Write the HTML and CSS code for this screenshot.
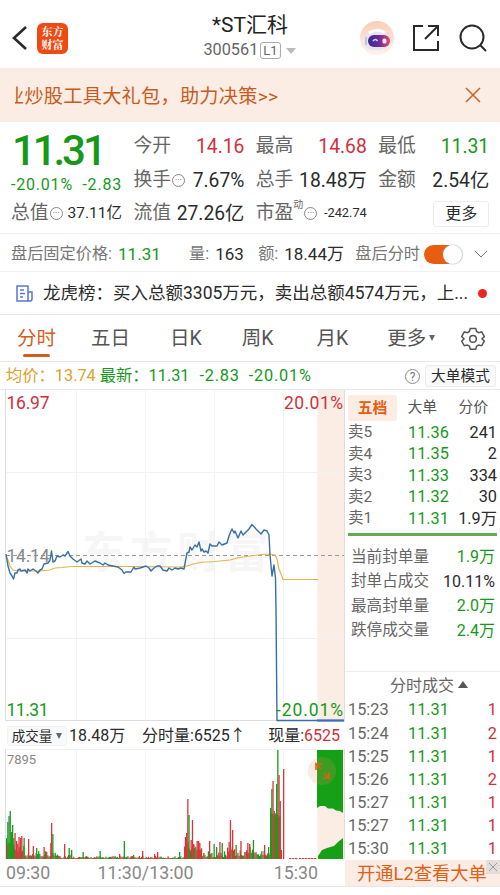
FILE: index.html
```html
<!DOCTYPE html>
<html lang="zh-CN">
<head>
    <meta charset="UTF-8">
    <meta name="viewport" content="width=device-width, initial-scale=1.0">
    <link rel="stylesheet" href="styles.css">
    <title>*ST汇科 300561</title>
</head>
<body>

    <!-- Header -->
    <header class="header">
        <svg class="back" width="16" height="26" viewBox="0 0 16 26"><path d="M14 2 2 13l12 11"/></svg>
        <div class="logo">东方<br>财富</div>
        <div class="title">
            <div class="stock-name">*ST汇科</div>
            <div class="stock-code">300561<span class="level">L1</span><i class="caret"></i></div>
        </div>
        <svg class="robot" width="36" height="36" viewBox="0 0 36 36">
            <defs>
                <linearGradient id="visor"><stop offset="0" stop-color="#352a91"/><stop offset=".5" stop-color="#6d2c9b"/><stop offset="1" stop-color="#df4868"/></linearGradient>
                <linearGradient id="halo" x2="0" y2="1"><stop offset="0" stop-color="#fbcdb8"/><stop offset="1" stop-color="#fff3ed"/></linearGradient>
            </defs>
            <circle cx="18" cy="18" r="17" fill="url(#halo)"/>
            <path d="M5 20C6 13 12 11 20 11s11 4 11 10-6 9-14 9S5 28 5 20Z" fill="#e6e4ee"/>
            <path d="M10 13c4-3 11-4 16 0" fill="none" stroke="#fff" stroke-width="3"/>
            <path d="M7 17v8" stroke="#c3c4d5" stroke-width="2"/>
            <rect x="9" y="15" width="22" height="12" rx="6" fill="url(#visor)"/>
            <path d="M14 21q2.500-3 4.500 0" fill="none" stroke="#cfd6ff" stroke-width="1.600"/>
            <rect x="23.500" y="18.500" width="4" height="5" rx="1.500" fill="#ffe6f1"/>
        </svg>
        <svg class="share" width="28" height="28" viewBox="0 0 28 28"><path d="M11 2H2v24h24V17M16 2h10v10M26 2 13 15"/></svg>
        <svg class="search" width="28" height="28" viewBox="0 0 28 28"><circle cx="13" cy="13" r="11.5"/><path d="m21 21 6 6"/></svg>
    </header>

    <!-- Promo banner -->
    <div class="promo">
        <div class="promo-text"><span>业炒股工具大礼包，助力决策&gt;&gt;</span></div>
        <svg width="16" height="16" viewBox="0 0 16 16"><path d="m1 1 14 14M15 1 1 15"/></svg>
    </div>

    <!-- Quote -->
    <section class="quote">
        <div class="price">
            <div class="price-now">11.31</div>
            <div class="price-rate"><span>-20.01%</span><span>-2.83</span></div>
        </div>
        <div class="cell"><label>今开</label><b class="red">14.16</b></div>
        <div class="cell"><label>最高</label><b class="red">14.68</b></div>
        <div class="cell"><label>最低</label><b class="green">11.31</b></div>
        <div class="cell"><label>换手<i class="dots">···</i></label><b>7.67%</b></div>
        <div class="cell"><label>总手</label><b>18.48万</b></div>
        <div class="cell"><label>金额</label><b>2.54亿</b></div>
        <div class="cell"><label>总值<i class="dots">···</i></label><b class="small">37.11亿</b></div>
        <div class="cell"><label>流值</label><b>27.26亿</b></div>
        <div class="cell"><label>市盈<sup>动</sup><i class="dots">···</i></label><b class="tiny">-242.74</b></div>
        <div class="cell end"><button class="more">更多</button></div>
    </section>

    <!-- After-hours fixed price -->
    <div class="after">
        <label>盘后固定价格:</label><b class="green after-price">11.31</b>
        <label>量:</label><b class="after-vol">163</b>
        <label>额:</label><b class="after-sum">18.44万</b>
        <label>盘后分时</label>
        <span class="switch"></span>
        <svg width="14" height="9" viewBox="0 0 14 9"><path d="m1 1 6 6 6-6"/></svg>
    </div>

    <!-- News -->
    <div class="news">
        <svg width="17" height="17" viewBox="0 0 17 17"><path d="M1 1h11v15H1zM12 7h4v7q0 2-2 2h-2M4 5h4M4 8.500h5M4 12h3"/></svg>
        <div class="news-text">龙虎榜：买入总额3305万元，卖出总额4574万元，上...</div>
        <i class="news-dot"></i>
    </div>

    <!-- Tabs -->
    <nav class="tabs">
        <a class="tab active">分时</a>
        <a class="tab">五日</a>
        <a class="tab">日K</a>
        <a class="tab">周K</a>
        <a class="tab">月K</a>
        <a class="tab">更多<i class="caret dark"></i></a>
        <svg width="24" height="24" viewBox="0 0 24 24"><path d="M9.300 1.500h5.400l.9 3 2 1.150 3.100-.7 2.600 4.600L21 11.800l2.300 2.350-2.600 4.600-3.100-.75-2 1.150-.9 3.100H9.300l-.9-3.100-2-1.150-3.100.75-2.600-4.600L3 11.800.7 9.550l2.600-4.600 3.100.7 2-1.150z"/><circle cx="12" cy="11.900" r="3.300"/></svg>
    </nav>

    <!-- Averages line -->
    <div class="avg">
        <span class="yellow">均价：13.74</span>
        <span class="green latest">最新：11.31</span>
        <span class="green change">-2.83</span>
        <span class="green percent">-20.01%</span>
        <i class="help">?</i>
        <button class="mode">大单模式</button>
    </div>

    <main class="board">
        <!-- Charts -->
        <section class="charts">
            <svg class="price-chart" width="345" height="332" viewBox="0 390 345 332">
                <rect class="band" x="317.500" y="390" width="26.500" height="332"/>
                <text class="watermark" x="82" y="568" textLength="186">东方财富</text>
                <path class="grid" d="M76.500 390V721M145.500 390V721M214.500 390V721M283.500 390V721M6 472.500H343M6 638.500H343"/>
                <path class="frame" d="M5.500 390V720.500H344M344.500 390V722"/>
                <path class="middle" d="M6 555.500H344"/>
                <text class="label grey" x="6.500" y="562" textLength="43">14.14</text>
                <path class="avg-line" d="M6 556 8 560 10 566 13 570 18 571 30 571 40 571 50 570 55 568 62 567.500 72 566.500 100 566.500 140 566.500 180 567 187 566 193 564 200 562.500 215 561.500 230 560 237 558 250 556 262 554.500 270 554 275 555 277 559 279 569 281 574 283 579.500H318"/>
                <path class="price-line" d="M6 554 8 566 10 573 12 576 13.500 579 15 573 17 573 18 570 20 569 21 571 25 570 27 573 28 569 30 571 33 569 36 571 38 573 40 570 42 569 44 564 48 563 50 560 51.500 551 53 562 55 561 57 556 60 557 63 555 65 556 68 551.500 70 556 73 559 77 562 81 559 82 563 85 564 87 561 90 564 95 561 100 563 103 565 105 563 108 565 118 567 122 570 124 573.500 126 572 131 572 134 567 135 569 140 568 143 567 146 566 149 568 151 571 154 568 157 566 160 566 163 570 167 571 169 568 172 570 175 568 178 569 181 568 184 569 186 558 187 553 189 552 190 547 192 550 195 545 197 547 199 542 201 551 202 549 204 552 206 551 208 553 210 544 212 546 217 546 219 542 222 545 227 543 229 536 231 531 232 529 234 533 235 531 238 538 241 531 243 535 246 532 249 529 252 524.500 256 529 261 534 264 530 267 531 269 535 270 555 272 576 274 565 275.500 578 276 610 277 720.500H344"/>
                <path class="close-line" d="M317 720.500h27"/>
                <text class="label red" x="6.500" y="409" textLength="43">16.97</text>
                <text class="label red" x="284" y="409" textLength="59">20.01%</text>
                <text class="label green" x="6.500" y="716" textLength="42">11.31</text>
                <text class="label green" x="276" y="716" textLength="67">-20.01%</text>
            </svg>

            <div class="vol-head">
                <button class="vol-button">成交量<i class="caret dark"></i></button>
                <span class="vol-total">18.48万</span>
                <span class="vol-minute">分时量:6525↑</span>
                <span class="vol-now">现量:<em>6525</em></span>
            </div>

            <svg class="vol-chart" width="345" height="110" viewBox="0 749 345 110">
                <rect class="band" x="317.500" y="749" width="26.500" height="110"/>
                <path class="grid" d="M6 749.500H344M76.500 749V859M145.500 749V859M214.500 749V859M283.500 749V859"/>
                <path class="frame" d="M5.500 749V859M344.500 749V859"/>
                <g id="bars"></g>
                <path class="auction" d="M317 750h26v63l-3-2-4-.5-3-2-5 0-3-2.500-5 0-3 2zM318 859v-3l4-6 5-2 7-2 4-4 5-4v21z"/>
                <circle class="expand-bg" cx="322" cy="771" r="14"/>
                <path class="expand" d="M321 769l-5-5v6M316 764h6M324 773l5 5v-6M329 778h-6"/>
                <text class="vol-max" x="7" y="764" textLength="29">7895</text>
            </svg>

            <div class="times"><span>09:30</span><span class="noon">11:30/13:00</span><span>15:30</span></div>
        </section>

        <!-- Order book -->
        <aside class="side">
            <div class="side-tabs"><span class="on">五档</span><span>大单</span><span>分价</span></div>
            <div class="asks">
                <div class="row"><span>卖5</span><b class="green">11.36</b><b>241</b></div>
                <div class="row"><span>卖4</span><b class="green">11.35</b><b>2</b></div>
                <div class="row"><span>卖3</span><b class="green">11.33</b><b>334</b></div>
                <div class="row"><span>卖2</span><b class="green">11.32</b><b>30</b></div>
                <div class="row"><span>卖1</span><b class="green">11.31</b><b>1.9万</b></div>
            </div>
            <div class="stats">
                <div><span>当前封单量</span><b class="green">1.9万</b></div>
                <div><span>封单占成交</span><b>10.11%</b></div>
                <div><span>最高封单量</span><b class="green">2.0万</b></div>
                <div><span>跌停成交量</span><b class="green">2.4万</b></div>
            </div>
            <div class="deals-title">分时成交<i class="caret up"></i></div>
            <div class="deals">
                <div class="row"><span>15:23</span><b class="green">11.31</b><b class="red">1</b></div>
                <div class="row"><span>15:24</span><b class="green">11.31</b><b class="red">2</b></div>
                <div class="row"><span>15:25</span><b class="green">11.31</b><b class="red">1</b></div>
                <div class="row"><span>15:26</span><b class="green">11.31</b><b class="red">2</b></div>
                <div class="row"><span>15:27</span><b class="green">11.31</b><b class="red">1</b></div>
                <div class="row"><span>15:27</span><b class="green">11.31</b><b class="red">1</b></div>
                <div class="row"><span>15:30</span><b class="green">11.31</b><b class="red">1</b></div>
            </div>
            <div class="open-l2">开通L2查看大单
                <span class="open-close"><svg width="10" height="10" viewBox="0 0 10 10"><path d="m1 1 8 8M9 1 1 9"/></svg></span>
            </div>
        </aside>
    </main>

    <script src="script.js"></script>
</body>
</html>
```
FILE: styles.css
```css
* {
    box-sizing: border-box;
}

body {
    margin: 0;
    width: 500px;
    height: 895px;
    overflow: hidden;
    background: #fff;
    color: #2b2b2b;
    font-family: Roboto, "Noto Sans CJK SC", sans-serif;
    font-size: 16px;
    line-height: 1;
    white-space: nowrap;
}

b, i, em {
    font-weight: 400;
    font-style: normal;
}

button {
    padding: 0;
    font-family: inherit;
    color: #2b2b2b;
    background: #fff;
    border: 1px solid #ececec;
    border-radius: 3px;
}

svg {
    flex: none;
    fill: none;
}

.red { color: #cf303c; fill: #cf303c; }
.green { color: #16991a; fill: #16991a; }
.yellow { color: #e0a02e; }

.caret {
    display: inline-block;
    border: 5px solid transparent;
    border-top: 6px solid #bbb;
    border-bottom: 0;
}

.caret.dark {
    border-width: 6px 3.5px 0;
    border-top-color: #666;
}

.caret.up {
    border-width: 0 5px 7px;
    border-bottom: 7px solid #555;
}

/* Header */
.header {
    display: flex;
    align-items: center;
    height: 68px;
    padding: 8px 13px 0 12px;
}

.back, .share, .search {
    stroke: #292929;
    stroke-width: 2;
}

.back { stroke-width: 2.6; }

.logo {
    width: 31px;
    height: 31px;
    margin-left: 9px;
    padding-top: 2px;
    border-radius: 6px;
    background: #f04a14;
    color: #fff;
    font: 700 11px/13px "Noto Serif CJK SC", "Noto Sans CJK SC", sans-serif;
    text-align: center;
}

.title {
    flex: 1;
    margin-top: -3px;
    padding-left: 92px;
    text-align: center;
}

.stock-name {
    margin-left: 1px;
    font-size: 21px;
    line-height: 28px;
    color: #222;
}

.stock-code {
    display: flex;
    align-items: center;
    justify-content: center;
    height: 24px;
    font-size: 16.3px;
    color: #666;
}

.level {
    margin: 0 5px 0 2px;
    padding: 1px 2px;
    border: 1px solid #aaa;
    border-radius: 3px;
    font-size: 13px;
}

.robot { margin-left: 20px; }
.share { margin-left: 17px; }
.search { margin-left: 19px; }

/* Promo banner */
.promo {
    display: flex;
    align-items: center;
    justify-content: space-between;
    height: 54px;
    padding: 3px 19px 0 15px;
    background: #fbece4;
    color: #c85b20;
}

.promo-text {
    overflow: hidden;
    font-size: 19.2px;
    line-height: 28px;
}

.promo-text span {
    margin-left: -10px;
    letter-spacing: .25px;
}

.promo-text + svg { margin-top: -3px; }

.promo svg { stroke: #d2622a; stroke-width: 1.6; }

/* Quote */
.quote {
    display: grid;
    grid-template-columns: repeat(4, 111px);
    grid-template-rows: repeat(3, 33.5px);
    column-gap: 11.4px;
    height: 112px;
    padding: 8px 11px 0;
    border-bottom: 1px solid #f2f2f2;
}

.price { grid-row: span 2; }

.price-now {
    height: 42px;
    padding-left: 1px;
    font-size: 42px;
    font-weight: 500;
    line-height: 42px;
    letter-spacing: -3.1px;
    color: #16991a;
}

.price-rate {
    display: flex;
    justify-content: space-between;
    padding-top: 5px;
    font-size: 16px;
    letter-spacing: .8px;
    color: #16991a;
}

.cell {
    display: flex;
    align-items: center;
    justify-content: space-between;
    font-size: 19.3px;
}

.cell label {
    display: flex;
    align-items: center;
    font-size: 18.8px;
    color: #666;
}

.cell .small { font-size: 15.500px; }
.cell .tiny { font-size: 12.800px; }
.cell.end { justify-content: flex-end; }

.cell sup {
    align-self: flex-start;
    margin-top: -4px;
    font-size: 10px;
    line-height: 10px;
}

.dots {
    width: 13px;
    height: 13px;
    margin-left: 1px;
    border: 1px solid #888;
    border-radius: 50%;
    font-size: 9px;
    line-height: 11px;
    text-align: center;
}

.more {
    width: 56px;
    height: 26px;
    font-size: 16px;
    line-height: 22px;
}

/* After-hours */
.after {
    display: flex;
    align-items: center;
    height: 38px;
    padding: 3px 12px 0 11px;
    border-bottom: 1px solid #f2f2f2;
    font-size: 17px;
}

.after label { font-size: 16.2px; color: #777; }
.after b { margin-left: 6px; }
.after .after-price { width: 71px; }
.after .after-vol { width: 43px; }
.after .after-sum { width: 71px; }
.after svg { margin-left: auto; stroke: #777; }

.switch {
    width: 39px;
    height: 19px;
    margin-left: 4px;
    border-radius: 10px;
    background: linear-gradient(90deg, #e85d10 65%, #e3e3e3 65%);
    position: relative;
}

.switch::after {
    content: "";
    position: absolute;
    right: 1px;
    top: 0;
    width: 19px;
    height: 19px;
    border-radius: 50%;
    background: #fff;
    box-shadow: 0 0 2px #aaa;
}

/* News */
.news {
    display: flex;
    align-items: center;
    height: 43px;
    padding: 1px 13px 0 16px;
    border-bottom: 1px solid #e8e8e8;
    font-size: 17.5px;
}

.news svg { stroke: #5577d8; stroke-width: 1.5; }
.news-text { margin-left: 10px; }

.news-dot {
    width: 9px;
    height: 9px;
    margin-left: auto;
    border-radius: 50%;
    background: #e7281e;
}

/* Tabs */
.tabs {
    display: flex;
    align-items: center;
    height: 47px;
    padding: 1px 15px 0 17px;
    border-bottom: 1px solid #e8e8e8;
    font-size: 19.5px;
    color: #555;
}

.tab {
    position: relative;
    margin-right: 35px;
}

.tab:nth-child(2) { margin-right: 40px; }
.tab:nth-child(3) { margin-right: 40px; }
.tab:nth-child(4) { margin-right: 43px; }
.tab:nth-child(5) { margin-right: 39px; }
.tab:nth-child(6) { margin: 0; }
.tab .caret { margin-left: 3px; vertical-align: 4px; }
.tabs svg { margin-left: auto; stroke: #555; stroke-width: 1.5; }
.tab.active { color: #d45d1e; }

.tab.active::after {
    content: "";
    position: absolute;
    left: 6px;
    bottom: -9px;
    width: 27px;
    height: 3px;
    border-radius: 2px;
    background: #d45d1e;
}

/* Averages line */
.avg {
    display: flex;
    align-items: center;
    height: 28px;
    padding: 1px 4px 0 6px;
    border-bottom: 1px solid #e8e8e8;
    font-size: 16.3px;
}

.latest { margin-left: 4px; }
.change { margin: 0 9px 0 10px; letter-spacing: .8px; }
.percent { letter-spacing: .8px; }

.help {
    width: 15px;
    height: 15px;
    margin-left: auto;
    border: 1px solid #888;
    border-radius: 50%;
    color: #777;
    font-size: 12px;
    line-height: 14px;
    text-align: center;
}

.mode {
    width: 71px;
    height: 22px;
    margin-left: 5px;
    background: #fafafa;
    font-size: 14.700px;
    line-height: 18px;
}

.board {
    display: flex;
    height: 497px;
    border-bottom: 1px solid #e8e8e8;
}

/* Charts */
.charts { width: 345px; }
.charts svg { display: block; }
.band { fill: #fbece4; }
.grid { stroke: #f2f2f2; }
.frame { stroke: #dedede; }
.middle { stroke: #999; stroke-dasharray: 4 3; }
.avg-line { stroke: #e3b64b; stroke-width: 1.2; }
.price-line { stroke: #396fa6; stroke-width: 1.4; stroke-linejoin: round; }
.close-line { stroke: #396fc0; stroke-width: 2; }
.label { font-size: 17.500px; }
.label.grey { fill: #888; }
.watermark { fill: #f6f6f6; font-size: 43px; font-weight: 700; }

.vol-head {
    display: flex;
    align-items: center;
    height: 27px;
    padding: 1px 5px 0 7px;
    font-size: 16px;
}

.vol-button {
    width: 60px;
    height: 20px;
    background: #f8f9fa;
    border-color: #f2f3f4;
    font-size: 13.500px;
    line-height: 16px;
}

.vol-button .caret { margin-left: 4px; vertical-align: 2px; }
.vol-total { width: 73px; margin-left: 2px; }
.vol-now { margin-left: auto; }
.vol-now em { color: #cf303c; }

.bar-up { fill: #dc3439; }
.bar-down { fill: #1c9a20; }
.auction { fill: #16a018; }
.expand-bg { fill: #f28b5c; opacity: .18; }
.expand { stroke: #e85d10; stroke-width: 1.6; }
.vol-max { fill: #888; font-size: 13px; }

.times {
    display: flex;
    justify-content: space-between;
    padding: 5px 27px 0 6px;
    font-size: 17.800px;
    color: #888;
}

.times .noon { margin-right: 33px; }

/* Order book */
.side { width: 155px; }

.side-tabs {
    display: flex;
    align-items: center;
    justify-content: space-between;
    height: 31px;
    padding: 4px 12px 0 3px;
    font-size: 14.800px;
    color: #555;
}

.side-tabs .on {
    width: 49px;
    margin-right: -11px;
    border-radius: 3px;
    background: #fbece4;
    color: #e85d10;
    font-weight: 700;
    line-height: 26px;
    text-align: center;
}

.row {
    display: grid;
    grid-template-columns: 60px 42px 1fr;
    align-items: center;
}

.row b:last-child { text-align: right; }
.row span { color: #666; }

.asks {
    height: 115px;
    margin: 0 3px;
    padding-top: 1px;
    border-bottom: 3px solid #5faf4d;
    font-size: 16.300px;
}

.asks .row { height: 21.600px; }
.asks span { font-size: 15.500px; }

.stats {
    height: 135px;
    padding: 9px 5px 0 6px;
    font-size: 16px;
}

.stats div {
    display: flex;
    align-items: center;
    justify-content: space-between;
    height: 24.600px;
}

.stats span { font-size: 15.600px; color: #666; }

.deals-title {
    height: 28px;
    border-top: 1px solid #eee;
    padding-left: 45px;
    line-height: 28px;
    color: #666;
}

.deals-title .caret { margin-left: 4px; vertical-align: 3px; }

.deals {
    height: 161px;
    margin: 0 3px;
    font-size: 16.300px;
}

.deals .row { height: 23.150px; }

.open-l2 {
    position: relative;
    height: 26px;
    padding-left: 12px;
    background: #fbece4;
    color: #df6118;
    font-size: 18.300px;
    line-height: 27px;
}

.open-close {
    position: absolute;
    top: 0;
    right: 0;
    display: flex;
    align-items: center;
    justify-content: center;
    width: 14px;
    height: 14px;
    background: #e4dedb;
}

.open-close svg { stroke: #999; }
```
FILE: script.js
```js
// Volume bars: [x, height, colour], r = up, g = down
const spikes = [
    [6, 15, 'r'], [7.2, 37, 'g'], [8.4, 43, 'g'], [9.6, 48, 'g'], [10.8, 27, 'g'], [12, 34, 'g'], [13.2, 21, 'g'],
    [14.4, 26, 'r'], [16, 18, 'r'], [17.2, 15, 'r'], [18.4, 22, 'r'], [20, 21, 'r'], [21.2, 23, 'r'], [23.5, 21, 'g'],
    [28, 20, 'r'], [32.7, 13, 'r'], [36, 11, 'g'], [43.5, 12, 'r'], [50.2, 16, 'r'], [51, 36, 'r'], [52.2, 25, 'g'],
    [64, 15, 'r'], [68.5, 11, 'g'], [71, 9, 'g'], [82.5, 7, 'g'], [99.5, 8, 'g'], [123.7, 18, 'g'], [119, 5, 'r'],
    [133, 4, 'r'], [142, 8, 'r'], [154, 5, 'r'], [157, 7, 'r'], [179, 7, 'g'],
    [184.8, 22, 'r'], [186, 26, 'r'], [187.2, 60, 'r'], [188.4, 44, 'g'], [190.5, 19, 'r'], [191.8, 39, 'r'], [193, 15, 'r'],
    [196.5, 18, 'r'], [198, 18, 'r'], [199.2, 16, 'r'], [209, 18, 'r'], [213.5, 15, 'g'], [216, 12, 'g'], [219.3, 17, 'r'], [221.6, 16, 'g'],
    [228.5, 17, 'r'], [229.8, 39, 'r'], [232, 29, 'r'], [235.5, 14, 'g'], [240.3, 18, 'r'], [247.2, 16, 'r'], [249, 15, 'r'], [252.8, 19, 'g'],
    [264, 14, 'r'], [268, 12, 'g'], [270, 51, 'g'], [271.2, 70, 'g'], [272.4, 78, 'r'], [273.6, 48, 'r'], [274.8, 43, 'g'],
    [276, 75, 'g'], [277.2, 109, 'g'], [278.4, 84, 'r'], [279.6, 58, 'r'], [283, 90, 'r'], [280.7, 9, 'r']
];

// Quiet trading between the spikes: [from, to, lowest, highest]
const ranges = [
    [6, 14, 14, 22], [14, 24, 7, 14], [24, 38, 2, 6], [38, 50, 2, 8], [50, 60, 3, 8], [60, 72, 1, 6], [72, 184, 1, 3],
    [184, 194, 8, 18], [194, 202, 9, 16], [202, 227, 2, 8], [227, 235, 7, 14], [235, 246, 3, 9],
    [246, 252, 6, 14], [252, 270, 3, 10], [270, 280, 42, 50]
];

const bars = document.getElementById('bars');

function addBar(x, height, colour) {
    const rect = document.createElementNS('http://www.w3.org/2000/svg', 'rect');
    rect.setAttribute('x', x);
    rect.setAttribute('y', 859 - height);
    rect.setAttribute('width', 1.3);
    rect.setAttribute('height', height);
    rect.setAttribute('class', colour === 'r' ? 'bar-up' : 'bar-down');
    bars.appendChild(rect);
}

let n = 0;
ranges.forEach(([from, to, low, high]) => {
    for (let x = from; x < to; x += 1.15) {
        n++;
        const noise = Math.abs(Math.sin(n * 12.9898) * 43758.5453) % 1;
        const colour = x > 14 && x < 270 && Math.sin(n * 0.8) + Math.cos(n * 1.7) > 0 ? 'r' : 'g';
        addBar(x, low + (high - low) * noise * noise, colour);
    }
});

spikes.forEach(([x, height, colour]) => addBar(x, height, colour));

// After-close trades
[289, 292, 295, 299, 302, 305, 308, 311, 314].forEach(x => {
    addBar(x, 1, 'r');
    addBar(x + 1, 1, 'r');
});
```
